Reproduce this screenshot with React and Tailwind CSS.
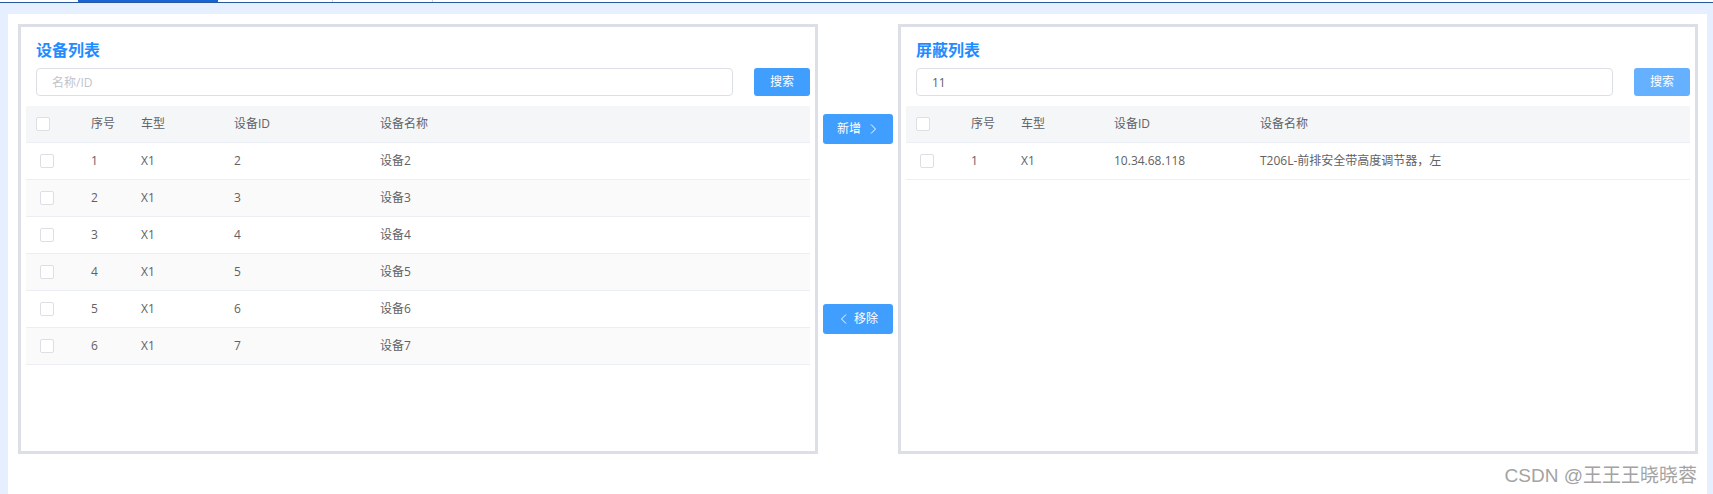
import { useState } from "react";

const leftRows = [
  { no: 1, type: "X1", id: "2", name: "设备2" },
  { no: 2, type: "X1", id: "3", name: "设备3" },
  { no: 3, type: "X1", id: "4", name: "设备4" },
  { no: 4, type: "X1", id: "5", name: "设备5" },
  { no: 5, type: "X1", id: "6", name: "设备6" },
  { no: 6, type: "X1", id: "7", name: "设备7" },
];

const rightRows = [
  { no: 1, type: "X1", id: "10.34.68.118", name: "T206L-前排安全带高度调节器，左" },
];

function Checkbox() {
  return (
    <span className="block h-[14px] w-[14px] rounded-[2px] border border-[#dcdfe6] bg-white"></span>
  );
}

function Chevron({ dir }) {
  return (
    <svg viewBox="0 0 12 12" className="h-[12px] w-[12px]" fill="none" stroke="currentColor" strokeWidth={1}>
      {dir === "right" ? <path d="M4 1.5 8.5 6 4 10.5" /> : <path d="M8 1.5 3.5 6 8 10.5" />}
    </svg>
  );
}

function DeviceTable({ rows }) {
  return (
    <div className="mx-[5px] mt-[10px] text-[12px] text-[#606266]">
      {/* header */}
      <div className="grid h-[37px] grid-cols-[65px_50px_93px_146px_1fr] items-center border-b border-[#ebeef5] bg-[#f5f6f7]">
        <div className="pl-[10px]">
          <Checkbox />
        </div>
        <div>序号</div>
        <div>车型</div>
        <div>设备ID</div>
        <div>设备名称</div>
      </div>
      {rows.map((r, i) => (
        <div
          key={r.no}
          className={
            "grid h-[37px] grid-cols-[65px_50px_93px_146px_1fr] items-center border-b border-[#ebeef5] " +
            (i % 2 === 1 ? "bg-[#fafafa]" : "bg-white")
          }
        >
          <div className="pl-[14px]">
            <Checkbox />
          </div>
          <div>{r.no}</div>
          <div>{r.type}</div>
          <div>{r.id}</div>
          <div>{r.name}</div>
        </div>
      ))}
    </div>
  );
}

function ListPanel({ title, value, placeholder, rows, light }) {
  const [q, setQ] = useState(value);
  return (
    <div className="h-[430px] w-[800px] shrink-0 border-[3px] border-[#dcdfe6] bg-white">
      <h2 className="pl-[15px] pt-[12px] text-[16px] font-bold leading-[22px] text-[#1f8cff]">{title}</h2>
      <div className="mt-[7px] flex items-center gap-[21px] pl-[15px] pr-[5px]">
        <input
          value={q}
          onChange={(e) => setQ(e.target.value)}
          placeholder={placeholder}
          className="h-[28px] flex-1 rounded-[4px] border border-[#dcdfe6] bg-white px-[15px] text-[12px] text-[#606266] outline-none placeholder:text-[#c0c4cc]"
        />
        <button
          className={
            "h-[28px] w-[56px] rounded-[3px] text-[12px] text-white " +
            (light ? "bg-[#66b1ff]" : "bg-[#409eff]")
          }
        >
          搜索
        </button>
      </div>
      <DeviceTable rows={rows} />
    </div>
  );
}

export default function App() {
  return (
    <div className="relative h-[494px] w-full overflow-hidden bg-white font-['Open_Sans','Noto_Sans_CJK_SC',sans-serif]">
      {/* top tabs strip */}
      <div className="flex h-[2px] bg-white">
        <div className="ml-[78px] w-[140px] bg-[#1565d8]"></div>
        <div className="ml-[114px] w-px bg-[#d0d4da]"></div>
        <div className="ml-[99px] w-px bg-[#d0d4da]"></div>
      </div>
      <div className="h-[1px] bg-[#25589c]"></div>

      <div className="bg-[#e6efff] pl-[8px] pr-[6px] pt-[11px]">
        <div className="flex h-[480px] bg-white pl-[10px] pt-[10px]">
          <ListPanel title="设备列表" value="" placeholder="名称/ID" rows={leftRows} />

          <div className="flex w-[80px] shrink-0 flex-col items-center pt-[90px]">
            <button className="flex h-[30px] w-[70px] items-center justify-center gap-[6px] rounded-[3px] bg-[#409eff] text-[12px] text-white">
              新增
              <Chevron dir="right" />
            </button>
            <button className="mt-[160px] flex h-[30px] w-[70px] items-center justify-center gap-[4px] rounded-[3px] bg-[#409eff] text-[12px] text-white">
              <Chevron dir="left" />
              移除
            </button>
          </div>

          <ListPanel title="屏蔽列表" value="11" placeholder="名称/ID" rows={rightRows} light />
        </div>
      </div>

      {/* watermark */}
      <div className="absolute bottom-[7px] right-[16px] font-['Liberation_Sans','Noto_Sans_CJK_SC',sans-serif] text-[19px] leading-[22px] text-[#a3a3a3]">
        CSDN @王王王晓晓蓉
      </div>
    </div>
  );
}
